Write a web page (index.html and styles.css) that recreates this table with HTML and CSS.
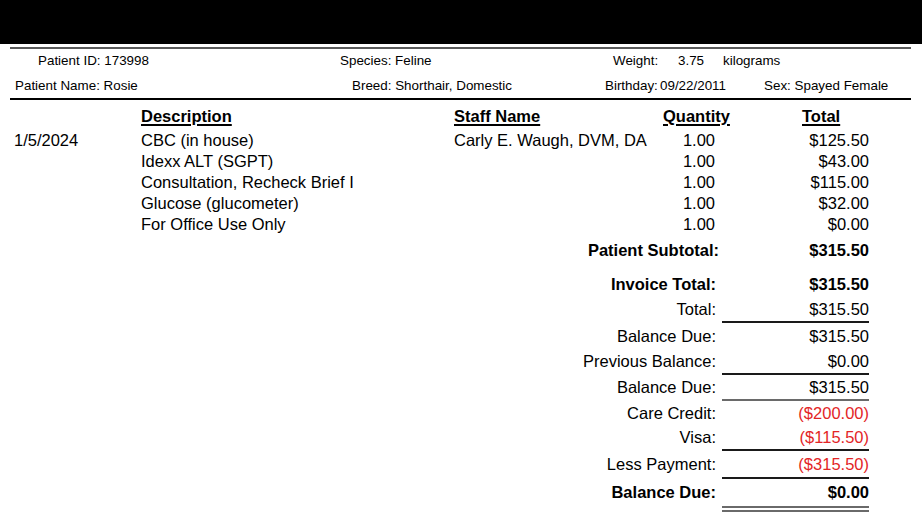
FILE: index.html
```html
<!DOCTYPE html>
<html lang="en">
<head>
<meta charset="utf-8">
<title>Invoice</title>
<link rel="stylesheet" href="styles.css">
</head>
<body>
<div class="topbar"></div>
<div class="sheet">
  <div class="info info-1">
    <span>Patient ID: 173998</span>
    <span>Species: Feline</span>
    <span>Weight:</span>
    <span>3.75</span>
    <span>kilograms</span>
  </div>
  <div class="info info-2">
    <span>Patient Name: Rosie</span>
    <span>Breed: Shorthair, Domestic</span>
    <span>Birthday:</span>
    <span>09/22/2011</span>
    <span>Sex: Spayed Female</span>
  </div>

  <div class="items">
    <div class="line head">
      <span></span>
      <span class="h">Description</span>
      <span class="h">Staff Name</span>
      <span class="h">Quantity</span>
      <span class="h h-total">Total</span>
    </div>
    <div class="line first">
      <span>1/5/2024</span>
      <span>CBC (in house)</span>
      <span>Carly E. Waugh, DVM, DA</span>
      <span class="qty">1.00</span>
      <span class="amt">$125.50</span>
    </div>
    <div class="line">
      <span></span>
      <span>Idexx ALT (SGPT)</span>
      <span></span>
      <span class="qty">1.00</span>
      <span class="amt">$43.00</span>
    </div>
    <div class="line">
      <span></span>
      <span>Consultation, Recheck Brief I</span>
      <span></span>
      <span class="qty">1.00</span>
      <span class="amt">$115.00</span>
    </div>
    <div class="line">
      <span></span>
      <span>Glucose (glucometer)</span>
      <span></span>
      <span class="qty">1.00</span>
      <span class="amt">$32.00</span>
    </div>
    <div class="line">
      <span></span>
      <span>For Office Use Only</span>
      <span></span>
      <span class="qty">1.00</span>
      <span class="amt">$0.00</span>
    </div>
  </div>

  <div class="summary">
    <div class="srow subtotal bold">
      <span class="lab lab-wide">Patient Subtotal:</span>
      <span class="val">$315.50</span>
    </div>
    <div class="srow invoice bold">
      <span class="lab">Invoice Total:</span>
      <span class="val">$315.50</span>
    </div>
    <div class="srow r-total">
      <span class="lab">Total:</span>
      <span class="val ul">$315.50</span>
    </div>
    <div class="srow r-bal1">
      <span class="lab">Balance Due:</span>
      <span class="val">$315.50</span>
    </div>
    <div class="srow r-prev">
      <span class="lab">Previous Balance:</span>
      <span class="val ul">$0.00</span>
    </div>
    <div class="srow r-bal2">
      <span class="lab">Balance Due:</span>
      <span class="val ul grey">$315.50</span>
    </div>
    <div class="srow r-care">
      <span class="lab">Care Credit:</span>
      <span class="val neg">($200.00)</span>
    </div>
    <div class="srow r-visa">
      <span class="lab">Visa:</span>
      <span class="val ul neg">($115.50)</span>
    </div>
    <div class="srow r-less">
      <span class="lab">Less Payment:</span>
      <span class="val ul neg">($315.50)</span>
    </div>
    <div class="srow r-final bold">
      <span class="lab">Balance Due:</span>
      <span class="val dbl">$0.00</span>
    </div>
  </div>
</div>
</body>
</html>
```

FILE: styles.css
```css
* {
  box-sizing: border-box;
}

html, body {
  margin: 0;
  padding: 0;
  background: #fff;
}

body {
  width: 922px;
  height: 521px;
  overflow: hidden;
  font-family: "Liberation Sans", Arial, sans-serif;
  color: #000;
}

.topbar {
  height: 44px;
  background: #000;
}

.sheet {
  margin: 3px 0 0 10px;
  width: 901px;
  border-top: 2px solid #5a5a5a;
}

/* patient info */
.info {
  display: grid;
  font-size: 13.4px;
  white-space: nowrap;
}

.info-1 {
  height: 24px;
  line-height: 24px;
  padding-left: 28px;
  grid-template-columns: 302px 273px 65px 45px auto;
}

.info-2 {
  height: 27px;
  line-height: 25px;
  padding-left: 5px;
  grid-template-columns: 337px 253px 55px 104px auto;
  border-bottom: 2px solid #000;
}

/* item lines */
.items {
  padding-left: 4px;
  font-size: 16.5px;
}

.line {
  display: grid;
  grid-template-columns: 127px 313px 209px 80px 126px;
  line-height: 21px;
  height: 21px;
  white-space: nowrap;
}

.line.head {
  margin-top: 6px;
}

.line.first {
  margin-top: 3px;
}

.h {
  font-weight: bold;
  text-decoration: underline;
  text-decoration-thickness: 1.5px;
  text-underline-offset: 2px;
}

.h-total {
  padding-left: 59px;
}

.qty {
  text-align: right;
  padding-right: 28px;
}

.amt {
  text-align: right;
}

/* summary */
.summary {
  width: 859px;
  font-size: 16.5px;
  white-space: nowrap;
}

.srow {
  display: grid;
  grid-template-columns: 1fr 147px;
  column-gap: 6px;
  align-items: start;
}

.bold {
  font-weight: bold;
}

.lab {
  text-align: right;
}

.lab-wide {
  margin-right: -3px;
}

.val {
  text-align: right;
}

.ul {
  border-bottom: 2px solid #1a1a1a;
}

.ul.grey {
  border-bottom-color: #6a6a6a;
}

.neg {
  color: #e32526;
}

.dbl {
  border-bottom: 6px double #6a6a6a;
}

.subtotal {
  margin-top: 5px;
  line-height: 21px;
}

.invoice {
  margin-top: 10px;
  line-height: 26px;
}

.r-total { line-height: 24px; }
.r-bal1 { line-height: 26px; }
.r-prev { line-height: 24px; }
.r-bal2 { line-height: 24px; }
.r-care { line-height: 25px; }
.r-visa { line-height: 23px; }
.r-less { line-height: 26px; }
.r-final { line-height: 27px; }
```
